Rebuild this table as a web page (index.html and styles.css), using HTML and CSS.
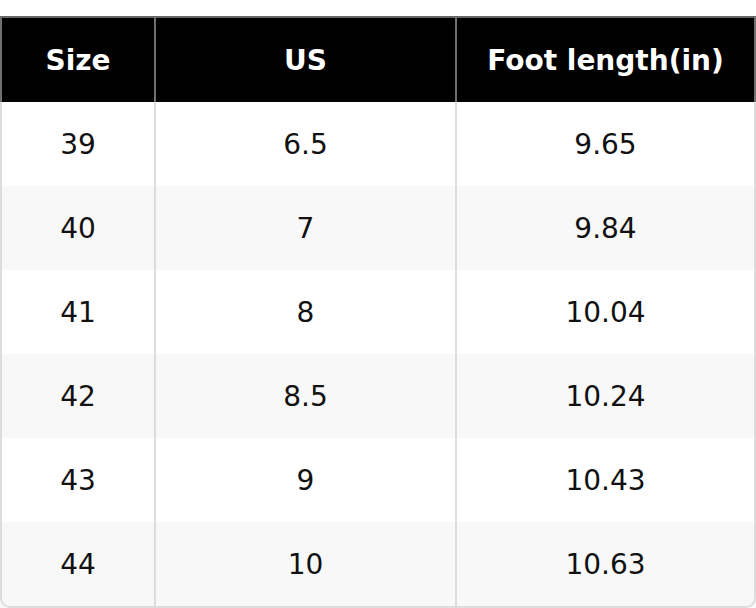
FILE: index.html
```html
<!DOCTYPE html>
<html>
<head>
<meta charset="utf-8">
<link rel="stylesheet" href="styles.css">
</head>
<body>
<div class="table">
  <div class="row head">
    <div class="cell">Size</div>
    <div class="cell">US</div>
    <div class="cell">Foot length(in)</div>
  </div>
  <div class="row"><div class="cell">39</div><div class="cell">6.5</div><div class="cell">9.65</div></div>
  <div class="row alt"><div class="cell">40</div><div class="cell">7</div><div class="cell">9.84</div></div>
  <div class="row"><div class="cell">41</div><div class="cell">8</div><div class="cell">10.04</div></div>
  <div class="row alt"><div class="cell">42</div><div class="cell">8.5</div><div class="cell">10.24</div></div>
  <div class="row"><div class="cell">43</div><div class="cell">9</div><div class="cell">10.43</div></div>
  <div class="row alt last"><div class="cell">44</div><div class="cell">10</div><div class="cell">10.63</div></div>
</div>
</body>
</html>
```
FILE: styles.css
```css
* { box-sizing: border-box; }
html, body { margin: 0; padding: 0; background: #fff; }
body { padding-top: 16px; font-family: "DejaVu Sans", sans-serif; font-size: 28px; color: #111; }
.table { display: flex; flex-direction: column; width: 756px; }
.row { display: grid; grid-template-columns: 154px 301px 1fr; height: 84px; background: #fff; }
.row.alt { background: #f8f8f8; }
.cell { display: flex; align-items: center; justify-content: center; border-left: 2px solid #dddddd; }
.cell:last-child { border-right: 2px solid #dddddd; }
.head { height: 86px; background: #000; color: #fff; font-weight: bold; }
.head .cell { border-top: 2px solid #666; border-left-color: #707070; }
.head .cell:last-child { border-right-color: #707070; }
.last { height: 86px; }
.last .cell { border-bottom: 2px solid #dddddd; }
.last .cell:first-child { border-bottom-left-radius: 10px; }
.last .cell:last-child { border-bottom-right-radius: 10px; }
```
